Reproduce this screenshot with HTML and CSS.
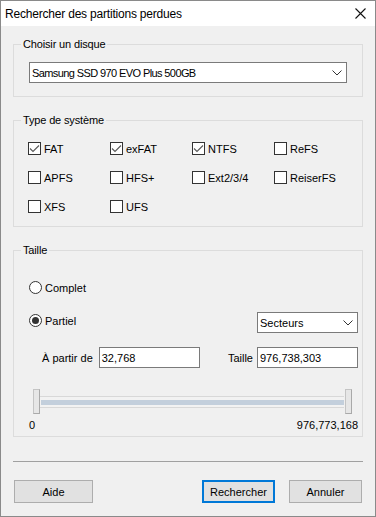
FILE: index.html
```html
<!DOCTYPE html>
<html lang="fr">
<head>
<meta charset="utf-8">
<title>Rechercher des partitions perdues</title>
<link rel="stylesheet" href="styles.css">
</head>
<body>
<div class="window">
  <div class="titlebar">
    <span class="title">Rechercher des partitions perdues</span>
    <svg class="close" width="11" height="11" viewBox="0 0 11 11"><path d="M0.5 0.5L10.5 10.5M10.5 0.5L0.5 10.5" stroke="#111" stroke-width="1.1" fill="none"/></svg>
  </div>
  <div class="content">
    <fieldset class="group">
      <legend>Choisir un disque</legend>
      <div class="body-disk">
        <div class="combo">
          <span class="combo-text disk-text">Samsung SSD 970 EVO Plus 500GB</span>
          <svg class="chev" width="10" height="6" viewBox="0 0 10 6"><path d="M0.5 0.5L5 5L9.5 0.5" stroke="#333" stroke-width="1" fill="none"/></svg>
        </div>
      </div>
    </fieldset>

    <fieldset class="group gap-top">
      <legend>Type de système</legend>
      <div class="body-type">
        <label class="check"><span class="box"><svg width="11" height="11" viewBox="0 0 11 11"><path d="M1 5.5L4 8.5L10 2.5" stroke="#5a5a5a" stroke-width="1.1" fill="none"/></svg></span>FAT</label>
        <label class="check"><span class="box"><svg width="11" height="11" viewBox="0 0 11 11"><path d="M1 5.5L4 8.5L10 2.5" stroke="#5a5a5a" stroke-width="1.1" fill="none"/></svg></span>exFAT</label>
        <label class="check"><span class="box"><svg width="11" height="11" viewBox="0 0 11 11"><path d="M1 5.5L4 8.5L10 2.5" stroke="#5a5a5a" stroke-width="1.1" fill="none"/></svg></span>NTFS</label>
        <label class="check"><span class="box"></span>ReFS</label>
        <label class="check"><span class="box"></span>APFS</label>
        <label class="check"><span class="box"></span>HFS+</label>
        <label class="check"><span class="box"></span>Ext2/3/4</label>
        <label class="check"><span class="box"></span>ReiserFS</label>
        <label class="check"><span class="box"></span>XFS</label>
        <label class="check"><span class="box"></span>UFS</label>
      </div>
    </fieldset>

    <fieldset class="group gap-top">
      <legend>Taille</legend>
      <div class="body-size">
        <div class="radio-line"><span class="radio"></span>Complet</div>
        <div class="partial-row">
          <div class="radio-line"><span class="radio on"><span class="dot"></span></span>Partiel</div>
          <div class="combo combo-unit">
            <span class="combo-text">Secteurs</span>
            <svg class="chev" width="10" height="6" viewBox="0 0 10 6"><path d="M0.5 0.5L5 5L9.5 0.5" stroke="#333" stroke-width="1" fill="none"/></svg>
          </div>
        </div>
        <div class="range-row">
          <span class="field-label">À partir de</span>
          <span class="field">32,768</span>
          <span class="field-label second">Taille</span>
          <span class="field">976,738,303</span>
        </div>
        <div class="slider">
          <span class="thumb"></span>
          <span class="track"><span class="bar"></span></span>
          <span class="thumb"></span>
        </div>
        <div class="scale"><span>0</span><span>976,773,168</span></div>
      </div>
    </fieldset>

    <div class="sep"></div>

    <div class="footer">
      <button class="btn btn-help">Aide</button>
      <button class="btn btn-default">Rechercher</button>
      <button class="btn btn-cancel">Annuler</button>
    </div>
  </div>
</div>
</body>
</html>
```

FILE: styles.css
```css
html, body {
  margin: 0;
  padding: 0;
}
body {
  width: 376px;
  height: 517px;
  overflow: hidden;
  background: #f0f0f0;
  font-family: "Liberation Sans", Arial, sans-serif;
  font-size: 11px;
  color: #000;
}
.window {
  box-sizing: border-box;
  width: 376px;
  height: 517px;
  border: 1px solid #8a8a8a;
  background: #f0f0f0;
  display: flex;
  flex-direction: column;
}
.titlebar {
  flex: none;
  height: 25px;
  background: #fff;
  display: flex;
  align-items: center;
  justify-content: space-between;
  padding: 0 9px 0 4px;
}
.title {
  font-size: 12px;
  letter-spacing: -0.2px;
  color: #000;
}
.close {
  display: block;
}
.content {
  flex: 1;
  display: flex;
  flex-direction: column;
  padding: 12px 12px 13px 12px;
}
.group {
  margin: 0;
  padding: 0;
  min-width: 0;
  border: 1px solid #dcdcdc;
}
.gap-top {
  margin-top: 17px;
}
.group legend {
  margin-left: 7px;
  padding: 0 2px;
  font-size: 11px;
  line-height: 13px;
  letter-spacing: -0.15px;
}
.body-disk {
  padding: 11px 15px 13px 15px;
}
.combo {
  box-sizing: border-box;
  height: 21px;
  border: 1px solid #7a7a7a;
  background: #fff;
  display: flex;
  align-items: center;
  justify-content: space-between;
  padding: 0 4px 0 2px;
}
.disk-text {
  letter-spacing: -0.6px;
}
.chev {
  display: block;
}
.body-type {
  display: grid;
  grid-template-columns: repeat(4, 82px);
  grid-auto-rows: 17px;
  row-gap: 12px;
  padding: 13px 0 11px 14px;
}
.check {
  display: flex;
  align-items: center;
  gap: 3px;
}
.box {
  box-sizing: border-box;
  width: 13px;
  height: 13px;
  border: 1px solid #333;
  background: #fff;
  display: flex;
  flex: none;
}
.box svg {
  display: block;
}
.body-size {
  display: flex;
  flex-direction: column;
  padding: 22px 4px 4px 15px;
}
.radio-line {
  height: 17px;
  display: flex;
  align-items: center;
  gap: 3px;
}
.radio {
  box-sizing: border-box;
  width: 13px;
  height: 13px;
  border: 1px solid #333;
  border-radius: 50%;
  background: #fff;
  display: flex;
  align-items: center;
  justify-content: center;
  flex: none;
}
.dot {
  width: 7px;
  height: 7px;
  border-radius: 50%;
  background: #333;
}
.partial-row {
  margin-top: 16px;
  display: flex;
  align-items: flex-start;
  justify-content: space-between;
}
.combo-unit {
  width: 101px;
}
.range-row {
  margin-top: 14px;
  display: flex;
  align-items: center;
  padding-left: 13px;
}
.field-label {
  margin-right: 6px;
}
.field-label.second {
  margin-left: auto;
  margin-right: 4px;
}
.field {
  box-sizing: border-box;
  width: 101px;
  height: 21px;
  border: 1px solid #7a7a7a;
  background: #fff;
  padding: 0 2px;
  display: flex;
  align-items: center;
}
.slider {
  margin-top: 21px;
  height: 25px;
  display: flex;
  padding: 0 6px 0 4px;
}
.thumb {
  box-sizing: border-box;
  width: 7px;
  height: 25px;
  flex: none;
  background: #e6e6e6;
  border: 1px solid #c4c4c4;
  border-right-color: #a9a9a9;
  border-bottom-color: #a9a9a9;
}
.track {
  flex: 1;
  margin: 7px 1px 0 0;
  height: 12px;
  box-sizing: border-box;
  border-top: 1px solid #d8d8d8;
  border-bottom: 1px solid #d8d8d8;
  padding: 3px 0 2px 1px;
  background: #f2f2f2;
}
.bar {
  display: block;
  height: 5px;
  background: #c3cfdc;
}
.scale {
  margin-top: 5px;
  height: 13px;
  line-height: 13px;
  display: flex;
  justify-content: space-between;
}
.sep {
  margin-top: 24px;
  height: 1px;
  background: #a0a0a0;
}
.footer {
  margin-top: 18px;
  display: flex;
  align-items: center;
}
.btn {
  box-sizing: border-box;
  height: 23px;
  width: 73px;
  padding: 0;
  margin: 0;
  background: #e1e1e1;
  border: 1px solid #adadad;
  border-radius: 0;
  font-family: "Liberation Sans", Arial, sans-serif;
  font-size: 11px;
  color: #000;
}
.btn-help {
  width: 79px;
  margin-left: 1px;
  margin-right: auto;
}
.btn-default {
  border: 2px solid #0078d7;
}
.btn-cancel {
  margin-left: 14px;
  margin-right: 1px;
}
```
